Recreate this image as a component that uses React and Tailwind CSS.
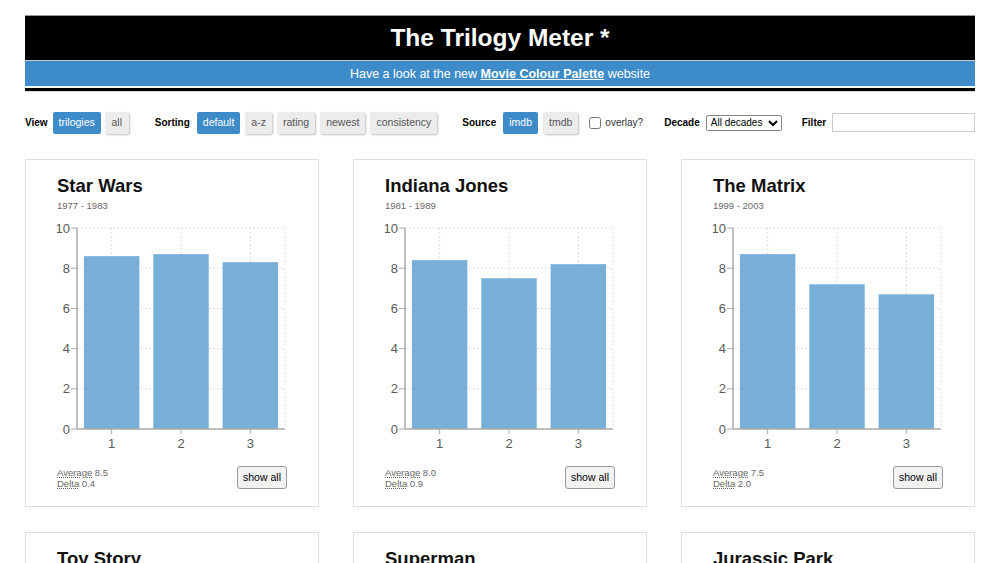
import { useState } from 'react';

const trilogies = [
    { title: 'Star Wars', years: '1977 - 1983', ratings: [8.6, 8.7, 8.3], avg: '8.5', delta: '0.4' },
    { title: 'Indiana Jones', years: '1981 - 1989', ratings: [8.4, 7.5, 8.2], avg: '8.0', delta: '0.9' },
    { title: 'The Matrix', years: '1999 - 2003', ratings: [8.7, 7.2, 6.7], avg: '7.5', delta: '2.0' },
    { title: 'Toy Story', years: '1995 - 2010', ratings: [8.3, 7.9, 8.3], avg: '8.2', delta: '0.4' },
    { title: 'Superman', years: '1978 - 1983', ratings: [7.4, 6.8, 5.0], avg: '6.4', delta: '2.4' },
    { title: 'Jurassic Park', years: '1993 - 2001', ratings: [8.2, 6.6, 5.9], avg: '6.9', delta: '2.3' },
];

// chart geometry, in svg units
const LEFT = 20;
const RIGHT = 228;
const TOP = 9;
const BOTTOM = 210;
const STEP = (RIGHT - LEFT) / 3;
const BAND = STEP * 0.8;
const y = (v) => BOTTOM - (v / 10) * (BOTTOM - TOP);

function BarChart({ ratings }) {
    return (
        <svg width="230" height="234" className="block">
            {/* grid */}
            {[0, 2, 4, 6, 8, 10].map((t) => (
                <line key={t} x1={LEFT} x2={RIGHT} y1={y(t)} y2={y(t)} stroke="#ddd" strokeDasharray="2,2" />
            ))}
            {[0, 1, 2].map((i) => (
                <line key={i} x1={LEFT + STEP * i + STEP / 2} x2={LEFT + STEP * i + STEP / 2} y1={TOP} y2={BOTTOM} stroke="#ddd" strokeDasharray="2,2" />
            ))}
            <line x1={RIGHT} x2={RIGHT} y1={TOP} y2={BOTTOM} stroke="#ddd" strokeDasharray="2,2" />

            {/* bars */}
            {ratings.map((r, i) => (
                <rect key={i} x={LEFT + STEP * i + STEP * 0.1} y={y(r)} width={BAND} height={BOTTOM - y(r)} fill="#78afd9" />
            ))}

            {/* y axis */}
            <line x1={LEFT} x2={LEFT} y1={TOP} y2={BOTTOM} stroke="#aaa" strokeWidth="1.5" />
            {[0, 2, 4, 6, 8, 10].map((t) => (
                <g key={t}>
                    <line x1={LEFT - 6} x2={LEFT} y1={y(t)} y2={y(t)} stroke="#aaa" />
                    <text x={LEFT - 7} y={y(t) + 4.5} textAnchor="end" fontSize="13" fill="#5a5a5a">{t}</text>
                </g>
            ))}

            {/* x axis */}
            <line x1={LEFT} x2={RIGHT} y1={BOTTOM} y2={BOTTOM} stroke="#aaa" strokeWidth="1.5" />
            {[0, 1, 2].map((i) => (
                <g key={i}>
                    <line x1={LEFT + STEP * i + STEP / 2} x2={LEFT + STEP * i + STEP / 2} y1={BOTTOM} y2={BOTTOM + 5} stroke="#aaa" />
                    <text x={LEFT + STEP * i + STEP / 2} y={BOTTOM + 19} textAnchor="middle" fontSize="13" fill="#5a5a5a">{i + 1}</text>
                </g>
            ))}
        </svg>
    );
}

function TrilogyCard({ t }) {
    return (
        <div className="h-[348px] border border-[#dcdcdc] bg-white px-[31px] pt-[15px]">
            <h2 className="text-[18.5px] font-bold leading-[21px] text-[#111]">{t.title}</h2>
            <div className="mt-[4px] text-[9.5px] leading-[11px] text-[#666]">{t.years}</div>
            <div className="mt-[8px]">
                <BarChart ratings={t.ratings} />
            </div>
            <div className="mt-[13px] flex items-center justify-between">
                <div className="text-[9.5px] leading-[11px] text-[#666]">
                    <div><abbr className="underline decoration-dotted">Average</abbr> {t.avg}</div>
                    <div><abbr className="underline decoration-dotted">Delta</abbr> {t.delta}</div>
                </div>
                <button className="h-[23px] w-[50px] rounded-[3px] border border-[#999] bg-[#f2f2f2] text-[10.5px] text-black">show all</button>
            </div>
        </div>
    );
}

function Toggle({ label, active, onClick }) {
    return (
        <button
            onClick={onClick}
            className={active
                ? 'h-[22px] min-w-[24px] shrink-0 whitespace-nowrap rounded-[2px] bg-[#3d8bc8] px-[6px] text-[10.5px] text-white'
                : 'h-[22px] min-w-[24px] shrink-0 whitespace-nowrap rounded-[2px] bg-[#ececec] px-[6px] text-[10.5px] text-[#555] shadow-[1px_1px_2px_rgba(0,0,0,0.25)]'}
        >
            {label}
        </button>
    );
}

export default function App() {
    const [view, setView] = useState('trilogies');
    const [sort, setSort] = useState('default');
    const [source, setSource] = useState('imdb');

    return (
        <div className="min-h-screen bg-white font-['Liberation_Sans',Arial,sans-serif]">
            <div className="mx-auto w-[950px] pt-[15px]">
                <div className="flex h-[45px] items-center justify-center border-t border-[#999] bg-black text-[24.5px] font-bold text-white">
                    The Trilogy Meter *
                </div>
                <div className="flex h-[26px] items-center justify-center border-t border-[#ccc] bg-[#3d8bc8] pt-[1px] text-[12.5px] text-white">
                    <span>Have a look at the new <a href="#" className="font-bold underline">Movie Colour Palette</a> website</span>
                </div>
                <div className="h-[2px] bg-white" />
                <div className="h-[4px] border-b border-[#ddd] bg-black" />

                <div className="mt-[19px] flex h-[23px] items-center whitespace-nowrap text-[10.5px]">
                    <span className="mr-[5px] shrink-0 text-[10px] font-bold">View</span>
                    <div className="flex shrink-0 gap-[4px]">
                        {['trilogies', 'all'].map((v) => (
                            <Toggle key={v} label={v} active={view === v} onClick={() => setView(v)} />
                        ))}
                    </div>

                    <span className="ml-[26px] mr-[7px] shrink-0 text-[10px] font-bold">Sorting</span>
                    <div className="flex shrink-0 gap-[5px]">
                        {['default', 'a-z', 'rating', 'newest', 'consistency'].map((s) => (
                            <Toggle key={s} label={s} active={sort === s} onClick={() => setSort(s)} />
                        ))}
                    </div>

                    <span className="ml-[25px] mr-[7px] shrink-0 text-[10px] font-bold">Source</span>
                    <div className="flex shrink-0 gap-[5px]">
                        {['imdb', 'tmdb'].map((s) => (
                            <Toggle key={s} label={s} active={source === s} onClick={() => setSource(s)} />
                        ))}
                    </div>

                    <label className="ml-[11px] flex shrink-0 items-center gap-[4px] text-[10px] text-[#333]">
                        <input type="checkbox" className="m-0 h-[12px] w-[12px]" />
                        overlay?
                    </label>

                    <span className="ml-[21px] mr-[6px] shrink-0 text-[10px] font-bold">Decade</span>
                    <select className="h-[16px] w-[76px] shrink-0 rounded-[2px] border border-[#888] bg-white px-0 text-[10px] leading-none">
                        <option>All decades</option>
                        <option>1970s</option>
                        <option>1980s</option>
                        <option>1990s</option>
                        <option>2000s</option>
                    </select>

                    <span className="ml-[20px] mr-[6px] shrink-0 text-[10px] font-bold">Filter</span>
                    <input type="text" className="h-[19px] min-w-0 flex-1 border border-[#ccc] bg-white px-1 text-[11px]" />
                </div>

                <div className="mt-[25px] grid grid-cols-3 gap-x-[34px] gap-y-[25px] pb-10">
                    {trilogies.map((t) => (
                        <TrilogyCard key={t.title} t={t} />
                    ))}
                </div>
            </div>
        </div>
    );
}
